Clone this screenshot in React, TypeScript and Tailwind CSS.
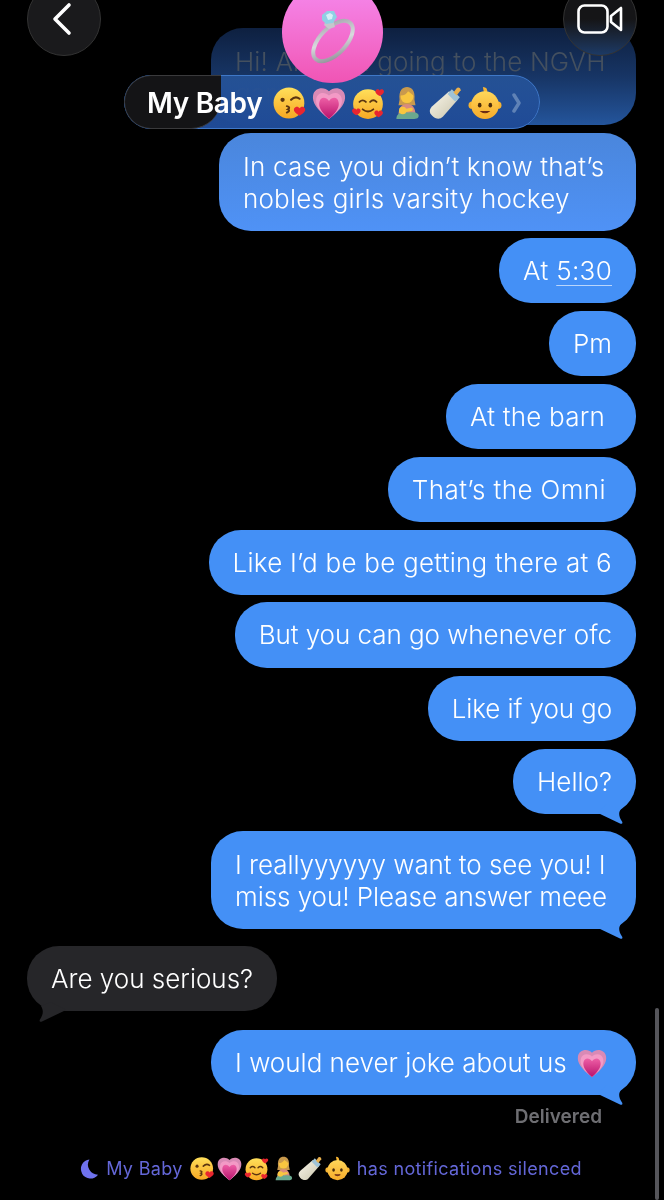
import React from "react";

const font = { fontFamily: '"Inter", "Liberation Sans", sans-serif' };

function Kiss({ s = 32 }: { s?: number }) {
  return (
    <svg width={s} height={s} viewBox="0 0 32 32" className="shrink-0">
      <defs>
        <linearGradient id="fa" x1="0" y1="0" x2="0" y2="1">
          <stop offset="0" stopColor="#ffdf5a" />
          <stop offset="1" stopColor="#f7a823" />
        </linearGradient>
      </defs>
      <circle cx="15" cy="16" r="14.5" fill="url(#fa)" />
      <circle cx="9" cy="13" r="2" fill="#5b3510" />
      <path d="M17 13q4-4 8 -1" fill="none" stroke="#5b3510" strokeWidth="2" strokeLinecap="round" />
      <path d="M13 19q4 1 1 3q3 1 -1 3" fill="none" stroke="#5b3510" strokeWidth="1.8" strokeLinecap="round" />
      <path d="M25 28c-5-3-6-5-5-7c1-2 4-2 5 0c1-2 4-2 5 0c1 2 0 4-5 7z" fill="#e8262f" />
    </svg>
  );
}

function Heart({ s = 32 }: { s?: number }) {
  return (
    <svg width={s} height={s} viewBox="0 0 32 32" className="shrink-0">
      <defs>
        <linearGradient id="ha" x1="0" y1="0" x2="0" y2="1">
          <stop offset="0" stopColor="#ee5fa6" />
          <stop offset="1" stopColor="#b8126c" />
        </linearGradient>
      </defs>
      <path d="M16 31C4 22 0 15 1 9C2 2 11 0 16 5C21 0 30 2 31 9C32 15 28 22 16 31z" fill="#d98ab5" />
      <path d="M16 31C6 23 3 17 4 12C5 6 12 5 16 9C20 5 27 6 28 12C29 17 26 23 16 31z" fill="#f39ac6" />
      <path d="M16 31C8 24 6 19 7 15C8 10 13 10 16 14C19 10 24 10 25 15C26 19 24 24 16 31z" fill="url(#ha)" />
    </svg>
  );
}

function Hearts({ s = 32 }: { s?: number }) {
  const h = (x: number, y: number, k: number) => (
    <path
      transform={`translate(${x} ${y}) scale(${k})`}
      d="M0 6C-5 3-6 1-5-1C-4-3-1-3 0-1C1-3 4-3 5-1C6 1 5 3 0 6z"
      fill="#e8262f"
    />
  );
  return (
    <svg width={s} height={s} viewBox="0 0 32 32" className="shrink-0">
      <defs>
        <linearGradient id="fb" x1="0" y1="0" x2="0" y2="1">
          <stop offset="0" stopColor="#ffdf5a" />
          <stop offset="1" stopColor="#f7a823" />
        </linearGradient>
      </defs>
      <circle cx="16" cy="17" r="14" fill="url(#fb)" />
      <path d="M8 15q3-3 6 0M18 15q3-3 6 0" fill="none" stroke="#5b3510" strokeWidth="1.8" strokeLinecap="round" />
      <path d="M11 22q5 4 10 0" fill="none" stroke="#5b3510" strokeWidth="1.8" strokeLinecap="round" />
      {h(27, 5, 0.75)}
      {h(5, 23, 0.75)}
      {h(26, 25, 0.75)}
    </svg>
  );
}

function Mother({ s = 32 }: { s?: number }) {
  return (
    <svg width={s} height={s} viewBox="0 0 32 32" className="shrink-0">
      <path d="M9 13C8 4 12 1 16 1C20 1 24 4 23 13L24 18H8z" fill="#c99a4d" />
      <circle cx="16" cy="10" r="6" fill="#f8c640" />
      <path d="M10 9q5 0 7-4q3 2 5 4q0-7-6-7q-6 0-6 7z" fill="#c99a4d" />
      <path d="M8 28C8 20 11 17 16 17C21 17 24 20 24 28z" fill="#d98a7e" />
      <path d="M6 31C6 25 12 24 17 25C23 24 27 25 27 28C27 31 24 31 20 31z" fill="#6aa88f" />
      <circle cx="12" cy="23" r="3.5" fill="#f8c640" />
      <path d="M10 24L20 22" stroke="#f8c640" strokeWidth="3" strokeLinecap="round" />
    </svg>
  );
}

function Bottle({ s = 32 }: { s?: number }) {
  return (
    <svg width={s} height={s} viewBox="0 0 32 32" className="shrink-0">
      <defs>
        <linearGradient id="bo" x1="0" y1="0" x2="1" y2="1">
          <stop offset="0" stopColor="#fbf8ec" />
          <stop offset="1" stopColor="#c9c4ac" />
        </linearGradient>
      </defs>
      <path d="M19 5L27 13L13 29C10 32 6 31 3 28C0 25 0 22 3 19z" fill="url(#bo)" />
      <path d="M17.5 7.5L24.5 14.5L27 13L29 10.5L21.5 3z" fill="#9fc3d6" />
      <path d="M23 6L26 2C27.5 0.5 30 2 29.8 4L26 9z" fill="#eab04c" />
    </svg>
  );
}

function BabyFace({ s = 32 }: { s?: number }) {
  return (
    <svg width={s} height={s} viewBox="0 0 32 32" className="shrink-0">
      <defs>
        <linearGradient id="ba" x1="0" y1="0" x2="0" y2="1">
          <stop offset="0" stopColor="#ffd75a" />
          <stop offset="1" stopColor="#f6ab2a" />
        </linearGradient>
      </defs>
      <circle cx="4" cy="18" r="3.5" fill="#f6b432" />
      <circle cx="28" cy="18" r="3.5" fill="#f6b432" />
      <path d="M14 1q5 0 4 6l-3-1z" fill="#f6b432" />
      <circle cx="16" cy="18" r="13" fill="url(#ba)" />
      <ellipse cx="11" cy="18" rx="1.7" ry="2.2" fill="#4a2c0c" />
      <ellipse cx="21" cy="18" rx="1.7" ry="2.2" fill="#4a2c0c" />
      <path d="M12.5 24q3.5 2.5 7 0q-3.5 0-7 0z" fill="#6a2a14" stroke="#6a2a14" strokeWidth="1" />
    </svg>
  );
}

function EmojiRow({ s, gap }: { s: number; gap: string }) {
  return (
    <span className={`inline-flex items-center ${gap}`}>
      <Kiss s={s} />
      <Heart s={s} />
      <Hearts s={s} />
      <Mother s={s} />
      <Bottle s={s} />
      <BabyFace s={s} />
    </span>
  );
}

function Ring() {
  return (
    <svg width="52" height="56" viewBox="0 0 52 56">
      <defs>
        <linearGradient id="ri" x1="0" y1="1" x2="1" y2="0">
          <stop offset="0" stopColor="#85858c" />
          <stop offset="0.5" stopColor="#d9d9de" />
          <stop offset="1" stopColor="#a0a0a8" />
        </linearGradient>
      </defs>
      <ellipse cx="26" cy="32" rx="25" ry="13" transform="rotate(-46 26 32)" fill="none" stroke="url(#ri)" strokeWidth="4" />
      <path d="M17 16l5 4 6-2 -2-7h-7z" fill="#c6c6cc" />
      <path d="M15 6l5-4 7 0 3 6-4 6-7 1-4-4z" fill="#8fd0e4" />
      <path d="M19 6l4-2 3 2-1 4-4 1z" fill="#d4f0f7" />
    </svg>
  );
}

function Bubble({
  children,
  className = "",
  tail = false,
}: {
  children: React.ReactNode;
  className?: string;
  tail?: boolean;
}) {
  return (
    <div className={`relative self-end rounded-[32px] bg-[#4490f6] text-white ${className}`}>
      {children}
      {tail && (
        <svg width="30" height="20" viewBox="0 0 30 20" className="absolute right-[10px] bottom-[-10px]">
          <path d="M2 9L24 19.5C26 20.5 27 19 26 17.5C23 13 22 9 25 5L10 0z" fill="#4490f6" />
        </svg>
      )}
    </div>
  );
}

const row = "text-[26px] leading-[32px] px-6 pt-[17px] whitespace-nowrap";

export default function App() {
  return (
    <div
      style={font}
      className="relative h-[1200px] w-[664px] overflow-hidden bg-black font-[350] blur-[0.35px]"
    >
      {/* Conversation */}
      <div className="flex flex-col items-stretch pt-7 pr-7 pl-[27px]">
        <div className="h-[97px] w-[425px] self-end overflow-hidden rounded-[32px] bg-gradient-to-b from-[#0e2040] via-[#173565] to-[#24559c] px-6 pt-[18px] text-[26px] leading-[32px] tracking-[0.12px] text-[#44505f]">
          <div className="whitespace-nowrap">Hi! Are you going to the NGVH</div>
          <div className="whitespace-nowrap">game</div>
        </div>

        <Bubble className="mt-2 h-[98px] w-[417px] bg-gradient-to-b from-[#4a86dc] to-[#4f92f6] px-6 py-[18px] text-[26px] leading-[32px] tracking-[0.2px]">
          <div className="whitespace-nowrap">In case you didn’t know that’s</div>
          <div className="whitespace-nowrap">nobles girls varsity hockey</div>
        </Bubble>

        <Bubble className={`mt-[7px] ${row} h-[65px] tracking-[0.3px]`}>
          At <span className="underline decoration-[#b9d5fb] decoration-1 underline-offset-[5px]">5:30</span>
        </Bubble>
        <Bubble className={`mt-2 ${row} h-[65px]`}>Pm</Bubble>
        <Bubble className={`mt-2 ${row} h-[65px] !pr-[31px] tracking-[0.2px]`}>At the barn</Bubble>
        <Bubble className={`mt-2 ${row} h-[65px] !pr-[30px] tracking-[0.4px]`}>That’s the Omni</Bubble>
        <Bubble className={`mt-2 ${row} h-[65px] tracking-[0.25px]`}>Like I’d be be getting there at 6</Bubble>
        <Bubble className={`mt-[7px] ${row} h-[66px] tracking-[-0.05px]`}>But you can go whenever ofc</Bubble>
        <Bubble className={`mt-2 ${row} h-[65px] tracking-[-0.1px]`}>Like if you go</Bubble>
        <Bubble tail className={`mt-2 ${row} h-[65px]`}>
          Hello?
        </Bubble>

        <Bubble tail className="mt-[17px] h-[98px] w-[425px] px-6 py-[18px] text-[26px] leading-[32px] tracking-[-0.05px]">
          <div className="whitespace-nowrap">I reallyyyyyy want to see you! I</div>
          <div className="whitespace-nowrap">miss you! Please answer meee</div>
        </Bubble>

        <div className="relative mt-[17px] h-[65px] w-[250px] self-start rounded-[32px] bg-[#262629] px-6 pt-[17px] text-[26px] leading-[32px] whitespace-nowrap text-white">
          Are you serious?
          <svg width="34" height="20" viewBox="0 0 34 20" className="absolute bottom-[-11px] left-[9px]">
            <path d="M30 8L6 19.5C4 20.5 3 19 4 17.5C7 13 8 9 5 4L15 0z" fill="#262629" />
          </svg>
        </div>

        <Bubble tail className="mt-[19px] flex h-[65px] w-[425px] items-center gap-[10px] px-6 text-[26px] leading-[32px] whitespace-nowrap">
          I would never joke about us
          <Heart s={30} />
        </Bubble>

        <div className="mt-[10px] mr-[34px] self-end text-[19px] leading-[24px] font-semibold text-[#6e6e72]">
          Delivered
        </div>

        <div className="mt-[27px] flex items-center justify-center gap-[7px] pr-[3px] text-[18px] leading-[24px] font-normal tracking-[0.35px] text-[#6467d8]">
          <svg width="21" height="22" viewBox="0 0 22 22" className="shrink-0">
            <path d="M12 1A10 10 0 1 0 21 17A10.5 10.5 0 0 1 12 1z" fill="#6f72ee" />
          </svg>
          <span>My Baby</span>
          <EmojiRow s={25} gap="gap-[2px]" />
          <span>has notifications silenced</span>
        </div>
      </div>

      {/* Scroll indicator */}
      <div className="absolute top-[1008px] right-[5px] h-[192px] w-[4px] rounded-full bg-[#55555a]" />

      {/* Back button */}
      <div className="absolute -top-[18px] left-[27px] flex h-[74px] w-[74px] items-center justify-center rounded-full border border-[#333] bg-[#1a1a1c]">
        <svg width="24" height="34" viewBox="0 0 24 34" className="mr-[5px]">
          <path d="M19 3L5 17L19 31" fill="none" stroke="white" strokeWidth="3.6" strokeLinecap="round" strokeLinejoin="round" />
        </svg>
      </div>

      {/* Video button */}
      <div className="absolute -top-[18px] right-[27px] flex h-[74px] w-[74px] items-center justify-center rounded-full border border-[#333] bg-gradient-to-b from-[#151517] via-[#151517] to-[#1c3a66]">
        <svg width="46" height="30" viewBox="0 0 46 30">
          <rect x="1.5" y="1.5" width="29" height="27" rx="6" fill="none" stroke="white" strokeWidth="2.6" />
          <path d="M34 12L44 4V26L34 18z" fill="none" stroke="white" strokeWidth="2.6" strokeLinejoin="round" />
        </svg>
      </div>

      {/* Contact capsule */}
      <div className="absolute top-[75px] left-[124px] h-[54px] w-[416px] overflow-hidden rounded-full bg-gradient-to-b from-[#265499]/90 to-[#1f4a96]">
        <div className="absolute inset-0 rounded-full border border-[#3f78c8]" />
        <div className="absolute top-0 bottom-0 left-0 w-[97px] rounded-l-[27px] rounded-br-[30px] border border-r-0 border-[#3a3a3c] bg-[#141416]" />
        <div className="relative flex h-full items-center pt-[2px] pl-[23px]">
          <span className="text-[28px] leading-[32px] font-semibold tracking-[-0.3px] text-white">My Baby</span>
          <span className="ml-[11px] flex">
            <EmojiRow s={34} gap="gap-[5px]" />
          </span>
          <svg width="10" height="20" viewBox="0 0 10 20" className="ml-[10px]">
            <path d="M2 2L7 10L2 18" fill="none" stroke="#5f82b6" strokeWidth="3.5" strokeLinecap="round" strokeLinejoin="round" />
          </svg>
        </div>
      </div>

      {/* Avatar */}
      <div className="absolute -top-[19px] left-[282px] flex h-[102px] w-[101px] items-center justify-center rounded-full bg-gradient-to-b from-[#f58af0] to-[#f054b4]">
        <span className="mt-[10px] flex">
          <Ring />
        </span>
      </div>
    </div>
  );
}
